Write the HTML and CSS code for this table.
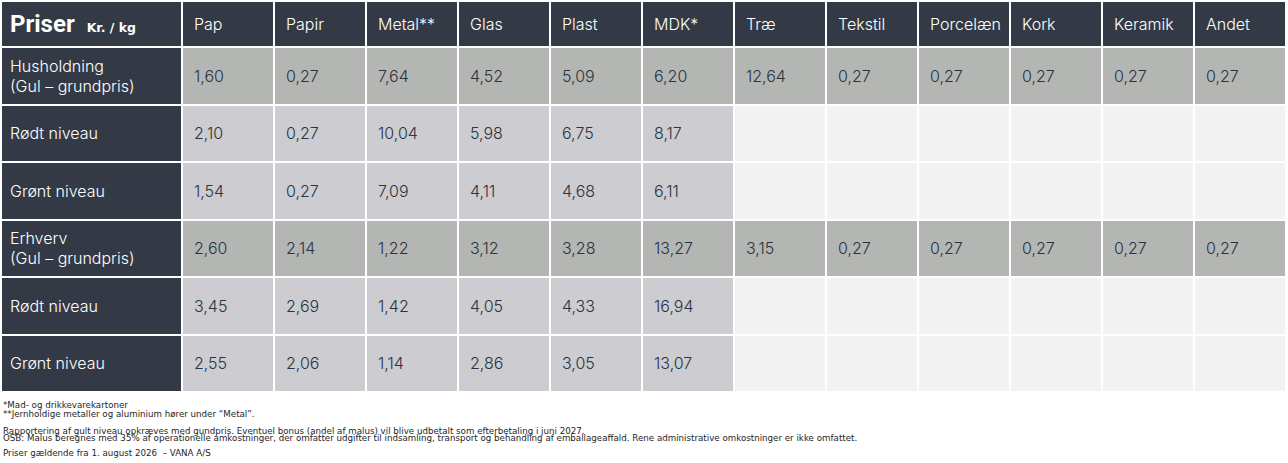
FILE: index.html
```html
<!DOCTYPE html>
<html lang="da">
<head>
<meta charset="utf-8">
<title>Priser</title>
<link rel="stylesheet" href="styles.css">
</head>
<body>
<table class="prices">
  <thead>
    <tr>
      <th class="corner"><span class="title">Priser</span><span class="unit">Kr. / kg</span></th>
      <th>Pap</th><th>Papir</th><th>Metal**</th><th>Glas</th><th>Plast</th><th>MDK*</th>
      <th>Træ</th><th>Tekstil</th><th>Porcelæn</th><th>Kork</th><th>Keramik</th><th>Andet</th>
    </tr>
  </thead>
  <tbody>
    <tr class="base">
      <th class="label">Husholdning<br>(Gul – grundpris)</th>
      <td>1,60</td><td>0,27</td><td>7,64</td><td>4,52</td><td>5,09</td><td>6,20</td>
      <td>12,64</td><td>0,27</td><td>0,27</td><td>0,27</td><td>0,27</td><td>0,27</td>
    </tr>
    <tr class="level">
      <th class="label">Rødt niveau</th>
      <td>2,10</td><td>0,27</td><td>10,04</td><td>5,98</td><td>6,75</td><td>8,17</td>
      <td class="empty"></td><td class="empty"></td><td class="empty"></td><td class="empty"></td><td class="empty"></td><td class="empty"></td>
    </tr>
    <tr class="level">
      <th class="label">Grønt niveau</th>
      <td>1,54</td><td>0,27</td><td>7,09</td><td>4,11</td><td>4,68</td><td>6,11</td>
      <td class="empty"></td><td class="empty"></td><td class="empty"></td><td class="empty"></td><td class="empty"></td><td class="empty"></td>
    </tr>
    <tr class="base">
      <th class="label">Erhverv<br>(Gul – grundpris)</th>
      <td>2,60</td><td>2,14</td><td>1,22</td><td>3,12</td><td>3,28</td><td>13,27</td>
      <td>3,15</td><td>0,27</td><td>0,27</td><td>0,27</td><td>0,27</td><td>0,27</td>
    </tr>
    <tr class="level">
      <th class="label">Rødt niveau</th>
      <td>3,45</td><td>2,69</td><td>1,42</td><td>4,05</td><td>4,33</td><td>16,94</td>
      <td class="empty"></td><td class="empty"></td><td class="empty"></td><td class="empty"></td><td class="empty"></td><td class="empty"></td>
    </tr>
    <tr class="level">
      <th class="label">Grønt niveau</th>
      <td>2,55</td><td>2,06</td><td>1,14</td><td>2,86</td><td>3,05</td><td>13,07</td>
      <td class="empty"></td><td class="empty"></td><td class="empty"></td><td class="empty"></td><td class="empty"></td><td class="empty"></td>
    </tr>
  </tbody>
</table>
<div class="notes">
  <p class="block loose">*Mad- og drikkevarekartoner<br>**Jernholdige metaller og aluminium hører under “Metal”.</p>
  <p class="block tight">Rapportering af gult niveau opkræves med gundpris. Eventuel bonus (andel af malus) vil blive udbetalt som efterbetaling i juni 2027.<br>OSB: Malus beregnes med 35% af operationelle amkostninger, der omfatter udgifter til indsamling, transport og behandling af emballageaffald. Rene administrative omkostninger er ikke omfattet.</p>
  <p class="block loose">Priser gældende fra 1. august 2026 &nbsp;– VANA A/S</p>
</div>
</body>
</html>
```
FILE: styles.css
```css
html, body {
  margin: 0;
  padding: 0;
  background: #ffffff;
}

body {
  width: 1288px;
  height: 463px;
  overflow: hidden;
}

.prices {
  border-collapse: separate;
  border-spacing: 2px;
  table-layout: fixed;
  width: 1287px;
  font-family: Inter, "Noto Sans", sans-serif;
  font-size: 16px;
}

.prices th,
.prices td {
  width: 90px;
  padding: 0 0 0 11px;
  text-align: left;
  vertical-align: middle;
  font-weight: 300;
  box-sizing: border-box;
  white-space: nowrap;
}

.prices thead th {
  height: 44px;
  background: #333a46;
  color: #ffffff;
}

.prices tbody tr {
  height: 55.5px;
}

.prices th.corner {
  width: 179px;
  padding-left: 8px;
}

.title {
  font-family: Roboto, sans-serif;
  font-weight: 700;
  font-size: 24px;
  margin-right: 12px;
}

.unit {
  font-family: "DejaVu Sans", sans-serif;
  font-weight: 700;
  font-size: 12.5px;
}

.prices th.label {
  width: 179px;
  padding-left: 8px;
  background: #333a46;
  color: #ffffff;
  line-height: 20px;
}

.prices td {
  color: #2c3340;
  font-weight: 350;
}

.base td {
  background: #b4b6b4;
}

.level td {
  background: #cdccd0;
}

.level td.empty {
  background: #f2f2f2;
}

.notes {
  font-family: "DejaVu Sans", sans-serif;
  font-size: 8.7px;
  color: #1e1e1e;
  padding-left: 3px;
}

.block {
  margin: 0;
  white-space: nowrap;
}

.loose {
  line-height: 9.5px;
}

.tight {
  line-height: 7.5px;
}

.notes .block:first-child {
  margin-top: 7.5px;
}

.notes .tight {
  margin-top: 8px;
}

.notes .tight + .loose {
  margin-top: 6px;
}
```
